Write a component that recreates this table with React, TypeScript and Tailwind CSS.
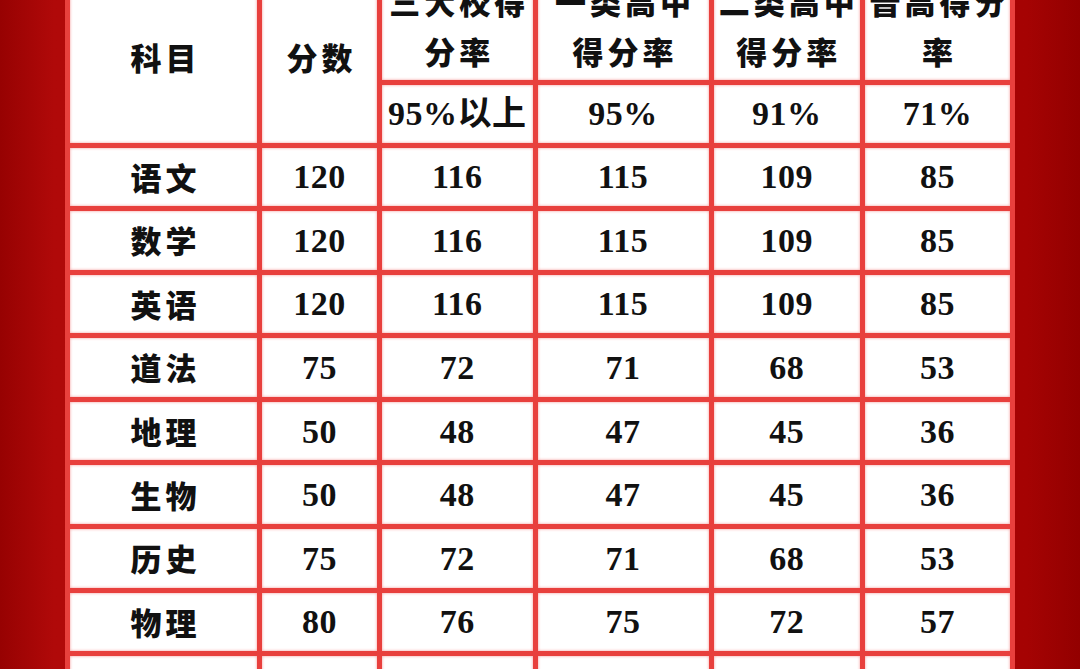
import React from "react";

type Row = string[];

const bodyRows: Row[] = [
  ["语文", "120", "116", "115", "109", "85"],
  ["数学", "120", "116", "115", "109", "85"],
  ["英语", "120", "116", "115", "109", "85"],
  ["道法", "75", "72", "71", "68", "53"],
  ["地理", "50", "48", "47", "45", "36"],
  ["生物", "50", "48", "47", "45", "36"],
  ["历史", "75", "72", "71", "68", "53"],
  ["物理", "80", "76", "75", "72", "57"],
  ["", "", "", "", "", ""],
];

// header columns 3-6: two text lines + rate underneath
const rateHeaders = [
  { lines: ["三大校得", "分率"], rate: "95%以上" },
  { lines: ["一类高中", "得分率"], rate: "95%" },
  { lines: ["二类高中", "得分率"], rate: "91%" },
  { lines: ["普高得分", "率"], rate: "71%" },
];

const cell =
  "bg-white flex items-center justify-center text-[#111] shadow-[inset_0_0_3px_rgba(235,60,60,0.55)]";
const cjk = "font-['Noto_Sans_CJK_SC',sans-serif] font-black text-[31px] tracking-[4px] pl-1";
const num = "font-['Liberation_Serif','Noto_Sans_CJK_SC',serif] font-bold text-[34px] tracking-[0.5px]";

const App = () => {
  return (
    <div className="w-[1080px] h-[669px] overflow-hidden bg-[linear-gradient(90deg,#970202_0%,#b00909_5%,#ac0707_50%,#a50303_95%,#930000_100%)]">
      <div className="ml-[65px] mt-[-33.5px] w-[950px] p-[5px] gap-[5px] bg-[#e8403d] grid grid-cols-[187px_115px_150.5px_171px_146.5px_145px] grid-rows-[108px_58px_repeat(9,58.6px)]">
        {/* header */}
        <div className={`${cell} ${cjk} row-span-2`}>科目</div>
        <div className={`${cell} ${cjk} row-span-2`}>分数</div>
        {rateHeaders.map((h, i) => (
          <div key={`h${i}`} className={`${cell} ${cjk} flex-col leading-[50px]`}>
            {h.lines.map((l) => (
              <span key={l}>{l}</span>
            ))}
          </div>
        ))}
        {rateHeaders.map((h, i) => (
          <div key={`r${i}`} className={`${cell} ${num}`}>
            {h.rate}
          </div>
        ))}

        {/* body */}
        {bodyRows.map((row, ri) =>
          row.map((v, ci) => (
            <div key={`${ri}-${ci}`} className={`${cell} ${ci === 0 ? cjk : num}`}>
              {v}
            </div>
          ))
        )}
      </div>
    </div>
  );
};

export default App;
